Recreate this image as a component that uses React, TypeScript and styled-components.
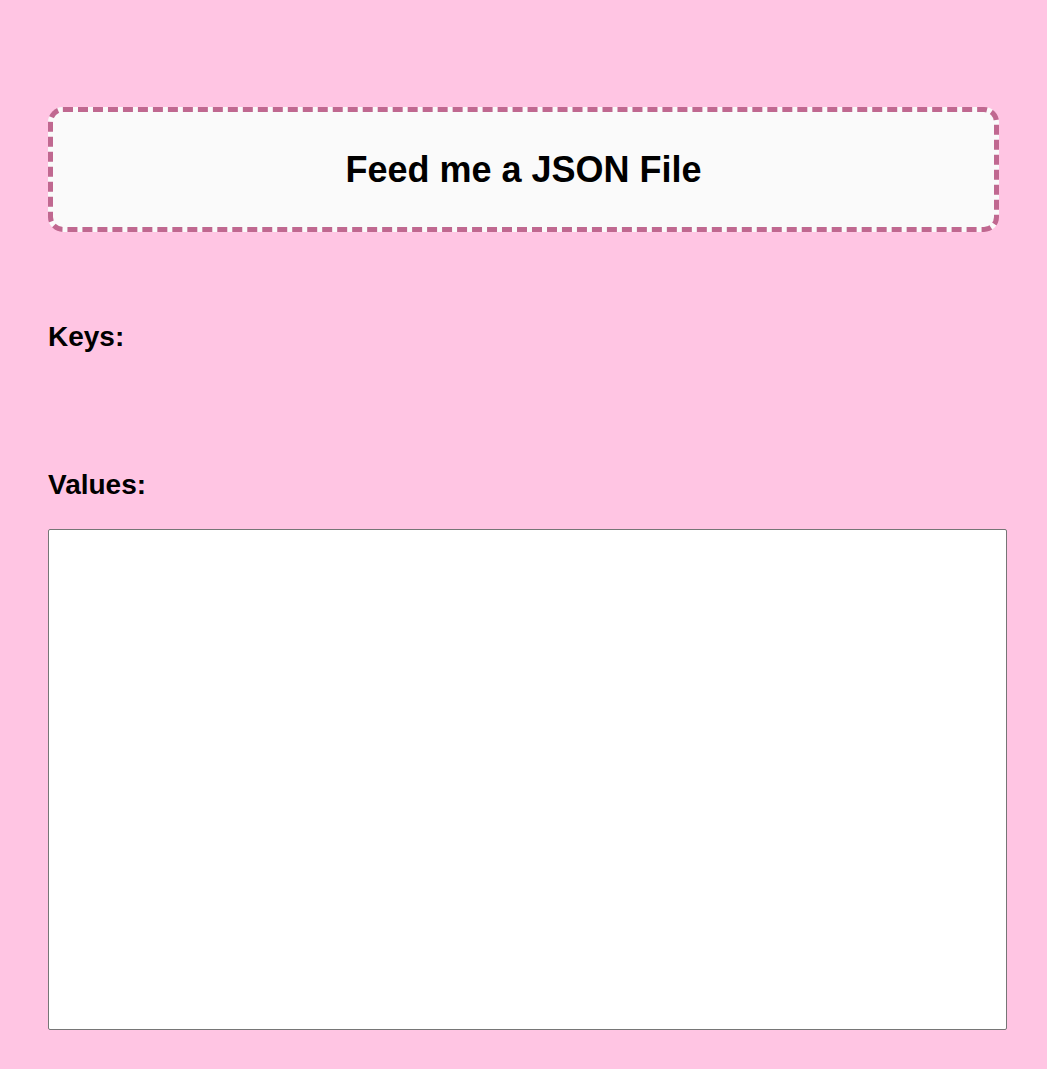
import React from 'react';
import styled, {createGlobalStyle} from "styled-components";

const GlobalStyle = createGlobalStyle`
  html, body {
    margin: 0;
    padding: 0;
    background: #ffc5e3;
    font-family: "Liberation Sans", Arial, sans-serif;
  }
`
const Page = styled.div`
  min-height: 1069px;
  box-sizing: border-box;
  padding: 107px 40px 39px 48px;
  display: flex;
  flex-direction: column;
`
const DropZone = styled.label`
  box-sizing: border-box;
  width: 951px;
  height: 125px;
  display: flex;
  align-items: center;
  justify-content: center;
  background: #fafafa;
  border: 5px dashed #c06890;
  border-radius: 15px;
  cursor: pointer;
`
const DropTitle = styled.h1`
  margin: 0;
  font-size: 36px;
  font-weight: 700;
  color: #000;
`
const Label = styled.h2<{ $top: number }>`
  margin: ${props => props.$top}px 0 0;
  font-size: 28px;
  line-height: 32px;
  font-weight: 700;
  color: #000;
`
const KeyList = styled.div`
  min-height: 0;
`
const ValuesArea = styled.textarea`
  box-sizing: border-box;
  margin-top: 28px;
  width: 959px;
  height: 501px;
  border: 1px solid #767676;
  border-radius: 2px;
  background: #fff;
  resize: none;
  outline: none;
  font-family: "Liberation Mono", monospace;
  font-size: 14px;
`

const App = () => {
    return (
        <>
            <GlobalStyle/>
            <Page>
                <DropZone>
                    <DropTitle>Feed me a JSON File</DropTitle>
                </DropZone>
                <Label $top={89}>Keys:</Label>
                <KeyList/>
                <Label $top={116}>Values:</Label>
                <ValuesArea readOnly value=""/>
            </Page>
        </>
    );
};

export default App;
